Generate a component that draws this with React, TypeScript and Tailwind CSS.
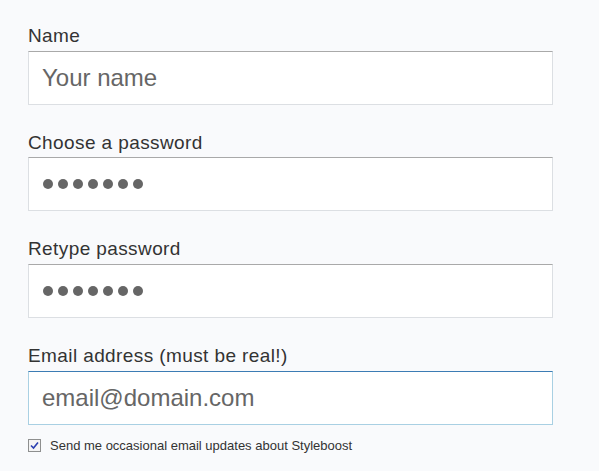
import React from "react";

const font = { fontFamily: '"Liberation Sans", Arial, sans-serif' };

function Label({ children }: { children: React.ReactNode }) {
  return (
    <label className="block text-[19px] leading-[20.67px] tracking-[0.4px] text-[#333] mb-[4px]">{children}</label>
  );
}

function Dots() {
  return (
    <div className="flex items-center gap-[5px]">
      {[0, 1, 2, 3, 4, 5, 6].map((i) => (
        <span key={i} className="block w-[10px] h-[10px] rounded-full bg-[#666]" />
      ))}
    </div>
  );
}

export default function App() {
  return (
    <div className="min-h-[471px] w-[599px] bg-[#f9fafc] pt-[26px] pl-[28px]" style={font}>
      <div className="w-[525px] flex flex-col gap-[28px]">
        <div>
          <Label>Name</Label>
          <div className="h-[54px] bg-white border border-[#dcdfe3] border-t-[#a9a9a9] flex items-center pl-[13px] text-[24px] text-[#666]">
            Your name
          </div>
        </div>
        <div>
          <Label>Choose a password</Label>
          <div className="h-[54px] bg-white border border-[#dcdfe3] border-t-[#a9a9a9] flex items-center pl-[14px]">
            <Dots />
          </div>
        </div>
        <div>
          <Label>Retype password</Label>
          <div className="h-[54px] bg-white border border-[#dcdfe3] border-t-[#a9a9a9] flex items-center pl-[14px]">
            <Dots />
          </div>
        </div>
        <div>
          <Label>Email address (must be real!)</Label>
          <div className="h-[54px] bg-white border border-[#a9d0e3] border-t-[#3c7cb4] flex items-center pl-[13px] text-[24px] text-[#666]">
            email@domain.com
          </div>
          <div className="flex items-center mt-[13px]">
            <span className="w-[13px] h-[13px] border border-[#8e8f8f] bg-[#f4f4f4] flex items-center justify-center">
              <svg width="9" height="9" viewBox="0 0 9 9">
                <path d="M1 4.5 L3.5 7 L8 1.5" stroke="#2a3fb0" strokeWidth="1.6" fill="none" />
              </svg>
            </span>
            <span className="ml-[9px] text-[13px] leading-[16px] text-[#333]">
              Send me occasional email updates about Styleboost
            </span>
          </div>
        </div>
      </div>
    </div>
  );
}
